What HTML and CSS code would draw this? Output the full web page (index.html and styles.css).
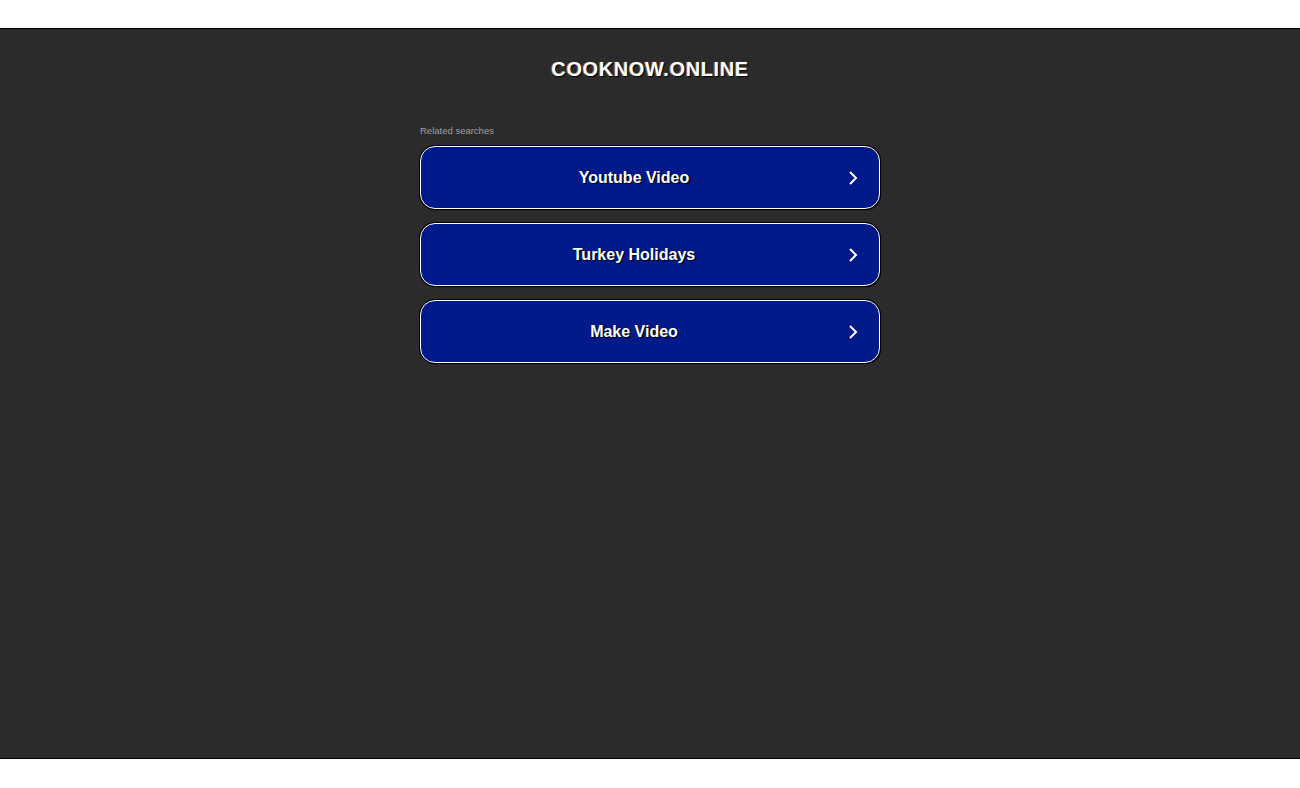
FILE: index.html
```html
<!DOCTYPE html>
<html>
<head>
<meta charset="utf-8">
<link rel="stylesheet" href="styles.css">
</head>
<body>
<div class="page">
  <h1 class="title">COOKNOW.ONLINE</h1>
  <div class="related">
    <div class="label">Related searches</div>
    <a class="btn"><span class="btn-text">Youtube Video</span><svg class="chev" viewBox="0 0 12 16" width="12" height="16"><path d="M3 2 L9 8 L3 14" fill="none" stroke="#fff" stroke-width="2"/></svg></a>
    <a class="btn"><span class="btn-text">Turkey Holidays</span><svg class="chev" viewBox="0 0 12 16" width="12" height="16"><path d="M3 2 L9 8 L3 14" fill="none" stroke="#fff" stroke-width="2"/></svg></a>
    <a class="btn"><span class="btn-text">Make Video</span><svg class="chev" viewBox="0 0 12 16" width="12" height="16"><path d="M3 2 L9 8 L3 14" fill="none" stroke="#fff" stroke-width="2"/></svg></a>
  </div>
</div>
</body>
</html>
```
FILE: styles.css
```css
html, body { margin: 0; padding: 0; background: #fff; }
body { padding-top: 28px; font-family: "Liberation Sans", Arial, sans-serif; }
.page {
  height: 729px;
  background: #2b2b2b;
  border-top: 1px solid #000;
  border-bottom: 1px solid #000;
  display: flex;
  flex-direction: column;
  align-items: center;
}
.title {
  margin: 28px 0 0;
  font-size: 20px;
  line-height: 24px;
  font-weight: bold;
  color: #fff;
  letter-spacing: 0.6px;
  text-shadow: 1px 1px 1px #000, -1px 0 1px rgba(255,200,120,0.4);
}
.related { width: 460px; margin-top: 44px; display: flex; flex-direction: column; }
.label { font-size: 9.5px; color: #a0a0a8; line-height: 12px; margin-bottom: 9px; }
.btn {
  box-sizing: border-box;
  height: 63px;
  margin-bottom: 14px;
  background: #011a8a;
  border: 1px solid #fff;
  border-radius: 15px;
  box-shadow: 0 0 0 1px #000, 1px 1px 1px #000;
  display: flex;
  align-items: center;
  padding: 0 20px 0 0;
  color: #fff;
  text-decoration: none;
}
.btn-text {
  flex: 1;
  text-align: center;
  font-size: 16px;
  font-weight: bold;
  text-shadow: 1px 1px 1px #000;
}
.chev { display: block; }
```
